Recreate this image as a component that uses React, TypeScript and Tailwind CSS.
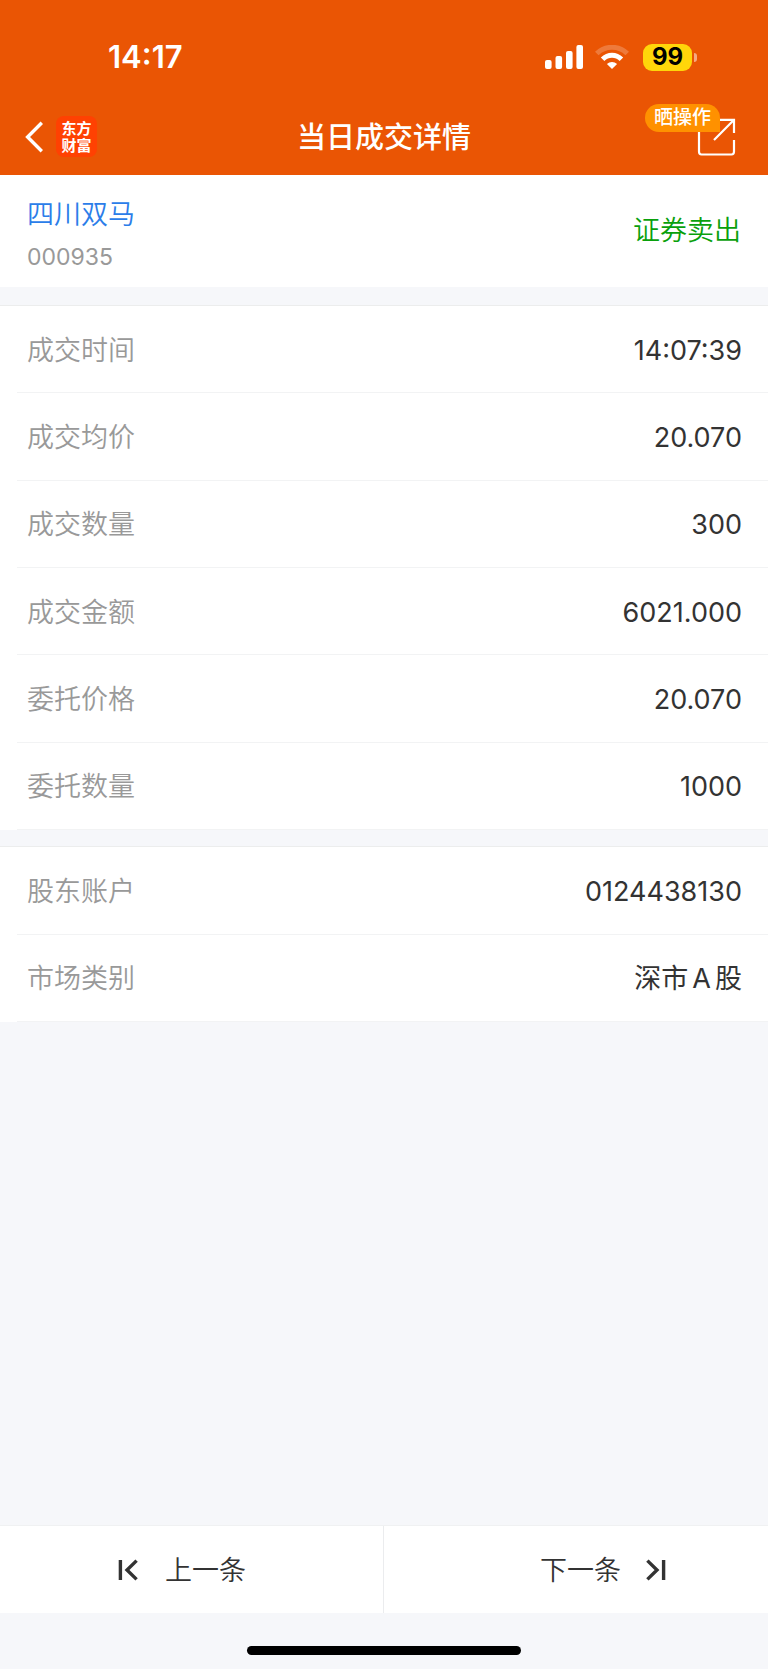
import type { ReactNode } from 'react';

type Field = { label: string; value: ReactNode };

const tradeFields: Field[] = [
  { label: '成交时间', value: '14:07:39' },
  { label: '成交均价', value: '20.070' },
  { label: '成交数量', value: '300' },
  { label: '成交金额', value: '6021.000' },
  { label: '委托价格', value: '20.070' },
  { label: '委托数量', value: '1000' },
];

const accountFields: Field[] = [
  { label: '股东账户', value: '0124438130' },
  {
    label: '市场类别',
    value: (
      <>
        深市<span className="mx-1">A</span>股
      </>
    ),
  },
];

function SignalIcon() {
  return (
    <svg width="38" height="24" viewBox="0 0 38 24" fill="#fff" aria-hidden="true">
      <rect x="0" y="15" width="6.6" height="9" rx="2" />
      <rect x="10.5" y="11" width="6.6" height="13" rx="2" />
      <rect x="21" y="6" width="6.6" height="18" rx="2" />
      <rect x="31.4" y="0" width="6.6" height="24" rx="2" />
    </svg>
  );
}

function WifiIcon() {
  return (
    <svg width="34" height="24" viewBox="0 0 34 24" fill="none" aria-hidden="true">
      <path d="M1.8 8.6C10 0.2 24 0.2 32.2 8.6" stroke="#fff" strokeOpacity="0.22" strokeWidth="5" />
      <path d="M7.6 14.2C13 8.8 21 8.8 26.4 14.2" stroke="#fff" strokeWidth="5" />
      <path d="M17 24L11.9 18.9C14.8 16.2 19.2 16.2 22.1 18.9Z" fill="#fff" />
    </svg>
  );
}

function StatusBar() {
  return (
    <div className="flex items-center justify-between pt-[41px] pr-[71px] pl-[108px]">
      <time className="text-[31px] leading-8 font-semibold">14:17</time>
      <div className="flex items-center">
        <SignalIcon />
        <div className="ml-3">
          <WifiIcon />
        </div>
        <div className="ml-[14px] flex h-[27px] w-[49px] items-center justify-center rounded-[9px] bg-[#ffd60a] text-2xl leading-6 font-bold text-black">
          99
        </div>
        <div className="ml-0.5 h-[9px] w-[3px] rounded-r-full bg-white/50" />
      </div>
    </div>
  );
}

function NavBar() {
  return (
    <div className="grid grid-cols-[1fr_auto_1fr] items-center px-6 pt-[43px] pb-[18px]">
      <div className="flex items-center gap-3">
        <button type="button" aria-label="返回">
          <svg width="20" height="32" viewBox="0 0 20 32" fill="none" aria-hidden="true">
            <path d="M17.8 1.8L3.6 16L17.8 30.2" stroke="#fff" strokeWidth="3.4" />
          </svg>
        </button>
        <div className="flex size-[41px] flex-col items-center justify-center rounded-lg bg-[#ff4102] text-[15px] leading-[17px] font-bold">
          <span>东方</span>
          <span>财富</span>
        </div>
      </div>
      <h1 className="pt-[3px] text-[29px] leading-9 font-medium">当日成交详情</h1>
      <button type="button" className="relative mr-2 justify-self-end" aria-label="晒操作">
        <svg width="39" height="39" viewBox="0 0 39 39" fill="none" stroke="#fff" strokeWidth="2.2" aria-hidden="true">
          <path d="M2 6V34.5Q2 37.5 4.5 37.5H34.5Q37 37.5 37 34.5V23" />
          <path d="M23 2.8H37V16M36.8 3L17 23" />
        </svg>
        <span className="absolute right-4 bottom-6 rounded-full rounded-br-none bg-[#ff9100] px-[9px] text-[19px] leading-7 font-medium whitespace-nowrap">
          晒操作
        </span>
      </button>
    </div>
  );
}

function FieldRow({ label, value }: Field) {
  return (
    <div className="ml-[17px] flex flex-1 items-center justify-between border-b border-[#f2f3f4] pt-[3px] pr-[26px] pl-[10px]">
      <dt className="text-[#999]">{label}</dt>
      <dd className="font-normal text-[#333]">{value}</dd>
    </div>
  );
}

export default function App() {
  return (
    <div className="flex min-h-screen flex-col bg-[#f6f7fa] font-['Inter','Noto_Sans_CJK_SC',sans-serif] text-[27px] leading-9 font-[350] text-[#333]">
      <header className="bg-[#ea5504] text-white">
        <StatusBar />
        <NavBar />
      </header>

      <main className="flex flex-1 flex-col">
        <section className="flex items-center justify-between bg-white px-[27px] py-4">
          <div className="pt-1.5">
            <h2 className="text-[#2b7de9]">四川双马</h2>
            <p className="mt-2.5 text-[23px] leading-7 font-normal text-[#999]">000935</p>
          </div>
          <p className="text-[#09a00c]">证券卖出</p>
        </section>

        <dl className="mt-[18px] flex min-h-[525px] flex-col border-t border-[#eceded] bg-white">
          {tradeFields.map((f) => (
            <FieldRow key={f.label} {...f} />
          ))}
        </dl>

        <dl className="mt-4 flex min-h-[176px] flex-col border-t border-[#eceded] bg-white">
          {accountFields.map((f) => (
            <FieldRow key={f.label} {...f} />
          ))}
        </dl>
      </main>

      <nav className="grid grid-cols-2 border-t border-[#f0f1f2] bg-white">
        <button type="button" className="flex h-[87px] items-center gap-[27px] border-r border-[#ebecee] pl-[118px]">
          <svg width="20" height="22" viewBox="0 0 20 22" fill="none" stroke="#333" strokeWidth="3.4" aria-hidden="true">
            <path d="M2.4 1V21M18.6 1.6L9 11L18.6 20.4" />
          </svg>
          <span className="pt-0.5">上一条</span>
        </button>
        <button type="button" className="flex h-[87px] items-center justify-end gap-[25px] pr-[102px]">
          <span className="pt-0.5">下一条</span>
          <svg width="20" height="22" viewBox="0 0 20 22" fill="none" stroke="#333" strokeWidth="3.4" aria-hidden="true">
            <path d="M17.6 1V21M1.4 1.6L11 11L1.4 20.4" />
          </svg>
        </button>
      </nav>

      <footer className="flex justify-center pt-[33px] pb-[14px]">
        <div className="h-[9px] w-[274px] rounded-full bg-black" />
      </footer>
    </div>
  );
}
